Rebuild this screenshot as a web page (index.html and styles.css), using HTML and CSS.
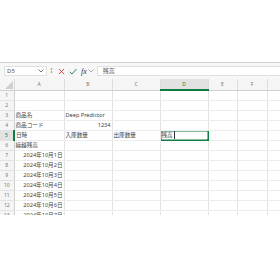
FILE: index.html
```html
<!DOCTYPE html>
<html lang="ja">
<head>
    <meta charset="UTF-8">
    <title>Sheet</title>
    <link rel="stylesheet" href="styles.css">
</head>
<body>
    <div class="top-space"></div>

    <div class="formula-bar">
        <div class="name-box">
            <span>D5</span>
            <svg class="chev" width="6" height="4" viewBox="0 0 6 4"><path d="M0.5 0.5 L3 3 L5.5 0.5" fill="none" stroke="#555" stroke-width="0.8"/></svg>
        </div>
        <div class="dots">⁞</div>
        <svg class="icon" width="7" height="7" viewBox="0 0 7 7"><path d="M1 1 L6 6 M6 1 L1 6" stroke="#d13438" stroke-width="0.9"/></svg>
        <svg class="icon" width="8" height="7" viewBox="0 0 8 7"><path d="M0.8 3.8 L3 6 L7.4 1" fill="none" stroke="#107c41" stroke-width="0.9"/></svg>
        <span class="fx">fx</span>
        <svg class="chev2" width="6" height="4" viewBox="0 0 6 4"><path d="M0.5 0.5 L3 3 L5.5 0.5" fill="none" stroke="#888" stroke-width="0.7"/></svg>
        <div class="formula-input">残高</div>
    </div>

    <div class="sheet">
        <table class="grid">
            <colgroup>
                <col class="c-rh">
                <col class="c-a">
                <col class="c-b">
                <col class="c-c">
                <col class="c-d">
                <col class="c-e">
                <col class="c-f">
                <col class="c-g">
            </colgroup>
            <thead>
                <tr>
                    <th class="corner"><span class="tri"></span></th>
                    <th>A</th>
                    <th>B</th>
                    <th>C</th>
                    <th class="sel-col">D</th>
                    <th>E</th>
                    <th>F</th>
                    <th></th>
                </tr>
            </thead>
            <tbody>
                <tr><th>1</th><td></td><td></td><td></td><td></td><td></td><td></td><td></td></tr>
                <tr><th>2</th><td></td><td></td><td></td><td></td><td></td><td></td><td></td></tr>
                <tr><th>3</th><td>商品名</td><td>Deep Predictor</td><td></td><td></td><td></td><td></td><td></td></tr>
                <tr><th>4</th><td>商品コード</td><td class="num">1234</td><td></td><td></td><td></td><td></td><td></td></tr>
                <tr><th class="sel-row">5</th><td>日時</td><td>入庫数量</td><td>出庫数量</td><td class="active"><span class="edit">残高</span><span class="handle"></span></td><td></td><td></td><td></td></tr>
                <tr><th>6</th><td>繰越残高</td><td></td><td></td><td></td><td></td><td></td><td></td></tr>
                <tr><th>7</th><td class="num">2024年10月1日</td><td></td><td></td><td></td><td></td><td></td><td></td></tr>
                <tr><th>8</th><td class="num">2024年10月2日</td><td></td><td></td><td></td><td></td><td></td><td></td></tr>
                <tr><th>9</th><td class="num">2024年10月3日</td><td></td><td></td><td></td><td></td><td></td><td></td></tr>
                <tr><th>10</th><td class="num">2024年10月4日</td><td></td><td></td><td></td><td></td><td></td><td></td></tr>
                <tr><th>11</th><td class="num">2024年10月5日</td><td></td><td></td><td></td><td></td><td></td><td></td></tr>
                <tr><th>12</th><td class="num">2024年10月6日</td><td></td><td></td><td></td><td></td><td></td><td></td></tr>
                <tr><th>13</th><td class="num">2024年10月7日</td><td></td><td></td><td></td><td></td><td></td><td></td></tr>
            </tbody>
        </table>
    </div>
</body>
</html>
```

FILE: styles.css
```css
body {
    margin: 0;
    background: #fff;
    font-family: "Noto Sans", "Noto Sans CJK JP", sans-serif;
    width: 280px;
    overflow: hidden;
}
.top-space {
    height: 62px;
}
.formula-bar {
    height: 17px;
    border-top: 1px solid #d4d4d4;
    background: #f7f7f7;
    display: flex;
    align-items: center;
    box-sizing: border-box;
    padding-left: 4px;
}
.name-box {
    width: 43px;
    height: 10px;
    box-sizing: border-box;
    background: #fff;
    border: 1px solid #e0e0e0;
    display: flex;
    align-items: center;
    justify-content: space-between;
    padding: 0 2px 0 2px;
    font-size: 6px;
    color: #555;
}
.dots {
    width: 9px;
    text-align: center;
    font-size: 7px;
    color: #777;
    line-height: 10px;
}
.icon {
    margin-left: 2px;
    margin-right: 2px;
}
.fx {
    font-family: "Liberation Serif", serif;
    font-style: italic;
    font-size: 8px;
    color: #333;
    margin-left: 2px;
}
.chev2 {
    margin-left: 1px;
    margin-right: 3px;
}
.formula-input {
    flex: 1;
    height: 10px;
    box-sizing: border-box;
    background: #fff;
    border: 1px solid #e0e0e0;
    border-right: none;
    font-size: 6px;
    line-height: 8px;
    padding-left: 5px;
    color: #555;
}
.sheet {
    height: 136px;
    overflow: hidden;
    box-shadow: 0 1px 1px rgba(0, 0, 0, 0.06);
}
.grid {
    border-collapse: collapse;
    table-layout: fixed;
    width: 300px;
}
.c-rh { width: 14px; }
.c-a { width: 50px; }
.c-b { width: 48px; }
.c-c { width: 48px; }
.c-d { width: 48px; }
.c-e { width: 29px; }
.c-f { width: 30px; }
.c-g { width: 33px; }
.grid th,
.grid td {
    height: 10px;
    padding: 0;
    box-sizing: border-box;
    line-height: 9px;
    white-space: nowrap;
    overflow: hidden;
}
.grid thead th {
    height: 11px;
    background: #f5f5f5;
    border-right: 1px solid #dcdcdc;
    border-bottom: 1px solid #cfcfcf;
    font-size: 5px;
    font-weight: normal;
    color: #777;
}
.grid thead th.sel-col {
    background: #e2e2e2;
    color: #107c41;
    border-bottom: 2px solid #107c41;
}
.corner {
    position: relative;
}
.tri {
    position: absolute;
    right: 1px;
    bottom: 1px;
    width: 0;
    height: 0;
    border-left: 8px solid transparent;
    border-bottom: 8px solid #d0d0d0;
}
.grid tbody th {
    background: #f5f5f5;
    border-right: 1px solid #cfcfcf;
    border-bottom: 1px solid #e3e3e3;
    font-size: 5px;
    font-weight: normal;
    color: #777;
    text-align: center;
}
.grid tbody th.sel-row {
    background: #e2e2e2;
    color: #107c41;
    border-right: 2px solid #107c41;
}
.grid td {
    border-right: 1px solid #e3e3e3;
    border-bottom: 1px solid #ececec;
    font-size: 5.6px;
    color: #444;
    padding-left: 1px;
}
.grid td.num {
    text-align: right;
    padding-right: 1px;
}
.grid td.active {
    position: relative;
    border: 1px solid #107c41;
    box-shadow: inset 0 0 0 0.5px #107c41;
}
.edit {
    border-right: 0.7px solid #333;
    padding-right: 1px;
}
.handle {
    position: absolute;
    right: -1px;
    bottom: -1px;
    width: 2px;
    height: 2px;
    background: #107c41;
}
```
